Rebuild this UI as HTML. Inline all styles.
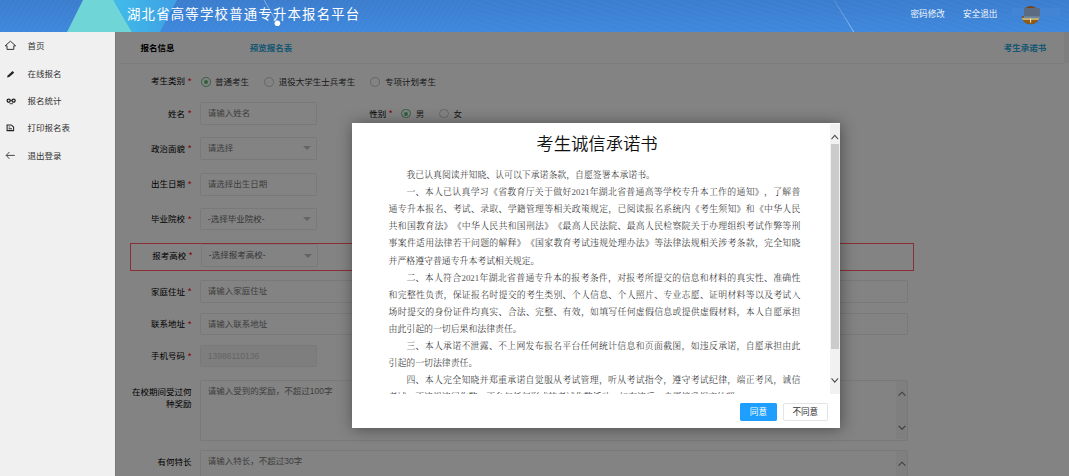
<!DOCTYPE html>
<html lang="zh-CN">
<head>
<meta charset="utf-8">
<title>湖北省高等学校普通专升本报名平台</title>
<style>
*{box-sizing:border-box;margin:0;padding:0}
html,body{width:1069px;height:476px;overflow:hidden}
body{position:relative;font-family:"Liberation Sans","Noto Sans CJK SC",sans-serif;font-size:8.5px;color:#333;background:#f0f0f0}
.abs{position:absolute}
/* header */
#hd{position:absolute;left:0;top:0;width:1069px;height:32px;background:#3d81d5;overflow:hidden}
#hd svg{position:absolute;left:0;top:0}
#title{position:absolute;left:127px;top:0;height:32px;line-height:30px;font-size:13.4px;letter-spacing:1.2px;color:#fff;white-space:nowrap}
.hl{position:absolute;top:0;height:32px;line-height:29px;font-weight:350;color:#fff;font-size:8.6px;white-space:nowrap}
/* sidebar */
#side{position:absolute;left:0;top:32px;width:115px;height:444px;background:#f0f0f0}
.mi{position:absolute;left:27.5px;height:14px;line-height:14px;font-size:8.5px;color:#333;white-space:nowrap}
#side svg{position:absolute}
/* main */
#main{position:absolute;left:115px;top:32px;width:954px;height:444px;background:#fff;overflow:hidden;border-left:1px solid #e9e9e9}
#card{position:absolute;left:1px;top:0;width:953px;height:460px}
#shade{position:absolute;left:115px;top:32px;width:954px;height:444px;background:rgba(0,0,0,.488)}
.tab{position:absolute;top:8px;height:16px;line-height:16px;font-weight:bold;font-size:8.5px;white-space:nowrap}
.lb{position:absolute;width:80px;text-align:right;line-height:12.3px;font-size:8.5px;color:#000;white-space:nowrap}
.lb i{font-style:normal;color:#f00;margin-left:2.6px;font-size:9.6px;position:relative;top:-.4px}
.ip{position:absolute;height:22.5px;border:1px solid #ececec;border-radius:1.5px;background:#fff;line-height:20.5px;padding-left:6.5px;font-size:8.5px;color:#7a7a7a;white-space:nowrap;overflow:hidden}
.ip.sel:after{content:"";position:absolute;right:4.9px;top:8.4px;border:4.3px solid transparent;border-top-color:#c2c2c2;border-bottom-width:0}
.rd{position:absolute;width:9.6px;height:9.6px;border-radius:50%;border:1px solid #c6c6c6;background:#fff}
.rd.on{border-color:#5fb878}
.rd.on:after{content:"";position:absolute;left:1.8px;top:1.8px;width:4px;height:4px;border-radius:50%;background:#5fb878}
.rt{position:absolute;height:14px;line-height:14px;font-size:8.5px;color:#333;white-space:nowrap}
/* modal */
#modal{position:absolute;left:352px;top:123px;width:488px;height:305px;background:#fff;box-shadow:.6px .6px 14px rgba(0,0,0,.42)}
#mc{position:absolute;left:0;top:0;width:478px;height:270.5px;overflow:hidden}
#mt{position:absolute;left:0;top:8.9px;font-weight:350;width:490px;text-align:center;font-size:17.35px;line-height:24px;color:#111}
.ln{position:absolute;left:36.6px;width:411.8px;height:17.1px;line-height:17.1px;font-family:"Liberation Serif","Noto Serif CJK SC",serif;font-size:8.9px;font-weight:300;color:#222;white-space:nowrap;text-align:justify;text-align-last:justify;text-spacing-trim:space-all}
.ln.in{left:54.4px;width:394px}
.dg{color:#555}
.ln.e{text-align:left;text-align-last:left}
#sb{position:absolute;left:478.4px;top:.5px;width:9.6px;height:270px;background:#f1f1f1}
#sb .th{position:absolute;left:.9px;top:20.5px;width:7.9px;height:205px;background:#cbcbcb}
#sb svg{position:absolute;left:0}
.btn{position:absolute;top:280px;height:17.5px;line-height:17.6px;font-size:8.6px;text-align:center;border-radius:1.2px;white-space:nowrap}
</style>
</head>
<body>

<div id="hd">
<svg width="1069" height="32" viewBox="0 0 1069 32">
<defs>
<pattern id="st" width="5" height="32" patternUnits="userSpaceOnUse" patternTransform="skewX(-30)">
<rect x="0" y="0" width="2.4" height="32" fill="#fff" fill-opacity=".02"/>
</pattern>
<pattern id="st2" width="40" height="4.6" patternUnits="userSpaceOnUse" patternTransform="rotate(17)"><rect x="0" y="0" width="40" height="2.2" fill="#fff" fill-opacity=".02"/></pattern>
<linearGradient id="hg" x1="0" y1="0" x2="0" y2="1"><stop offset="0" stop-color="#3b7ccd"/><stop offset="1" stop-color="#3e88dd"/></linearGradient>
<linearGradient id="lg" x1="0" y1="0" x2="0" y2="1"><stop offset="0" stop-color="#fff" stop-opacity=".12"/><stop offset="1" stop-color="#fff" stop-opacity=".5"/></linearGradient>
<linearGradient id="lb" x1="0" y1="0" x2="1" y2="0"><stop offset="0" stop-color="#40bcea"/><stop offset="1" stop-color="#3f9fe4"/></linearGradient>
</defs>
<rect width="1069" height="32" fill="url(#hg)"/>
<rect width="470" height="32" fill="url(#st)"/>
<rect x="470" width="599" height="32" fill="url(#st2)"/>
<polygon points="67,32 83,0 113.5,0 132,32" fill="#6fd5d6"/>
<polygon points="113.5,0 177,0 160,32 132,32" fill="url(#lb)"/>
<line x1="264" y1="0" x2="277.4" y2="23.2" stroke="#fff" stroke-opacity=".55" stroke-width=".7"/>
<circle cx="277.4" cy="23.3" r="2.8" fill="#fff"/>
<line x1="834.1" y1="0" x2="853.8" y2="32" stroke="url(#lg)" stroke-width=".9"/>
</svg>
<div id="title">湖北省高等学校普通专升本报名平台</div>
<div class="hl" style="left:910.5px">密码修改</div>
<div class="hl" style="left:963px">安全退出</div>
<svg width="58" height="32" viewBox="0 0 58 32" style="left:1005px">
<defs><clipPath id="av"><circle cx="25.6" cy="15.2" r="9.1"/></clipPath></defs>
<g clip-path="url(#av)">
<rect x="14" y="5" width="24" height="22" fill="#7a4413"/>
<rect x="14" y="17.8" width="24" height="2.4" fill="#cdb36a"/>
<rect x="14" y="20.2" width="24" height="7" fill="#8f5c17"/>
<rect x="25" y="18" width="1.1" height="4.6" fill="#e9e2c6"/>
</g>
<rect x="7" y="8" width="48" height="8.3" fill="#4484d4"/>
<rect x="19" y="8" width="15.9" height="10.1" fill="#5b6c82"/>
<rect x="19" y="16.3" width="15.9" height="1.8" fill="#6f89a2"/>
</svg>
</div>

<div id="side">
<!-- home -->
<svg width="13" height="11" viewBox="0 0 13 11" style="left:4.4px;top:8.4px"><path d="M6.4 1.2 L1.2 5.8 H3 V9.4 H9.8 V5.8 H11.6 Z" fill="none" stroke="#333" stroke-width="1" stroke-linejoin="miter"/></svg>
<div class="mi" style="top:6.6px">首页</div>
<!-- pencil -->
<svg width="10" height="9" viewBox="0 0 10 9" style="left:6px;top:37.6px"><path d="M1 7.6 L1.7 5.6 L6.6 1.1 L8.2 2.7 L3.2 7 Z" fill="#222"/></svg>
<div class="mi" style="top:34.8px">在线报名</div>
<!-- glasses -->
<svg width="11" height="7" viewBox="0 0 11 7" style="left:5.6px;top:65.6px"><circle cx="2.7" cy="2.6" r="1.55" fill="none" stroke="#222" stroke-width="1.3"/><circle cx="7.6" cy="2.6" r="1.55" fill="none" stroke="#222" stroke-width="1.3"/><path d="M3.6 5.7 H6.8" stroke="#222" stroke-width=".9"/><path d="M4.2 2.4 H6.2" stroke="#222" stroke-width=".8"/></svg>
<div class="mi" style="top:61.9px">报名统计</div>
<!-- doc -->
<svg width="9" height="8" viewBox="0 0 9 8" style="left:6.4px;top:92.4px"><path d="M1.1 .9 H5.2 L7.6 3 V6.6 H1.1 Z" fill="none" stroke="#222" stroke-width="1.05"/><path d="M2.6 4.8 H6" stroke="#222" stroke-width="1"/><path d="M2.6 3 H4.2" stroke="#222" stroke-width=".8"/></svg>
<div class="mi" style="top:89.2px">打印报名表</div>
<!-- arrow -->
<svg width="11" height="9" viewBox="0 0 11 9" style="left:5.4px;top:119px"><path d="M4.4 1 L1.2 4.4 L4.4 7.8 M1.4 4.4 H9.8" fill="none" stroke="#333" stroke-width=".9"/></svg>
<div class="mi" style="top:116.5px">退出登录</div>
</div>

<div id="main">
<div id="card">
<div class="abs" style="left:947px;top:0;width:6px;height:31px;background:#f6f6f6"></div>
<div class="tab" style="left:23.4px;color:#000">报名信息</div>
<div class="tab" style="left:132.7px;color:#2aa8e0">预览报名表</div>
<div class="tab" style="left:886.8px;color:#2aa8e0">考生承诺书</div>
<div class="abs" style="left:3.6px;top:30.8px;width:943.4px;height:1px;background:#efefef"></div>

<!-- row 1 -->
<div class="lb" style="left:-5.6px;top:43.3px">考生类别<i>*</i></div>
<div class="rd on" style="left:84px;top:45px"></div><div class="rt" style="left:98px;top:42.8px">普通考生</div>
<div class="rd" style="left:147.2px;top:45px"></div><div class="rt" style="left:161.8px;top:42.8px">退役大学生士兵考生</div>
<div class="rd" style="left:253.2px;top:45px"></div><div class="rt" style="left:267.9px;top:42.8px">专项计划考生</div>

<!-- row 2 -->
<div class="lb" style="left:-5.6px;top:75.8px">姓名<i>*</i></div>
<div class="ip" style="left:83.3px;top:70.3px;width:116.3px">请输入姓名</div>
<div class="lb" style="left:195.5px;top:75.6px">性别<i>*</i></div>
<div class="rd on" style="left:284.4px;top:76.8px"></div><div class="rt" style="left:298.8px;top:74.7px">男</div>
<div class="rd" style="left:322px;top:76.8px"></div><div class="rt" style="left:336.6px;top:74.7px">女</div>

<!-- row 3 -->
<div class="lb" style="left:-5.6px;top:110.6px">政治面貌<i>*</i></div>
<div class="ip sel" style="left:83.3px;top:105.1px;width:116.3px">请选择</div>

<!-- row 4 -->
<div class="lb" style="left:-5.6px;top:146px">出生日期<i>*</i></div>
<div class="ip" style="left:83.3px;top:141px;width:116.3px">请选择出生日期</div>

<!-- row 5 -->
<div class="lb" style="left:-5.6px;top:181px">毕业院校<i>*</i></div>
<div class="ip sel" style="left:83.3px;top:175.8px;width:116.3px;color:#6a6a6a">-选择毕业院校-</div>

<!-- row 6 red box -->
<div class="lb" style="left:-4.5px;top:217.8px">报考高校<i>*</i></div>
<div class="ip sel" style="left:84.3px;top:212.3px;width:116.3px;color:#6a6a6a">-选择报考高校-</div>

<!-- row 7 -->
<div class="lb" style="left:-5.6px;top:253.6px">家庭住址<i>*</i></div>
<div class="ip" style="left:83.3px;top:248.2px;width:707.3px">请输入家庭住址</div>

<!-- row 8 -->
<div class="lb" style="left:-5.6px;top:286.2px">联系地址<i>*</i></div>
<div class="ip" style="left:83.3px;top:280.5px;width:707.3px">请输入联系地址</div>

<!-- row 9 -->
<div class="lb" style="left:-5.6px;top:318.2px">手机号码<i>*</i></div>
<div class="ip" style="left:83.3px;top:312.9px;width:116.3px;background:#f5f5f5;color:#c4c4c4">13986110136</div>

<!-- row 10 -->
<div class="lb" style="left:-5.6px;top:353.6px">在校期间受过何<br>种奖励</div>
<div class="ip" style="left:83.3px;top:348px;width:707.3px;height:61px;line-height:21px">请输入受到的奖励，不超过100字
<div class="abs" style="right:0;top:0;width:10.3px;height:58.4px;background:#f7f7f7"></div>
<svg class="abs" width="10" height="58" viewBox="0 0 10 58" style="right:0;top:0"><path d="M1.6 14.6 L5 11.2 L8.4 14.6 M1.6 44.8 L5 48.2 L8.4 44.8" fill="none" stroke="#777" stroke-width="1.15"/></svg>
</div>

<!-- row 11 -->
<div class="lb" style="left:-5.6px;top:423.6px">有何特长</div>
<div class="ip" style="left:83.3px;top:418.2px;width:707.3px;height:50px;line-height:21px">请输入特长，不超过30字
<div class="abs" style="right:0;top:0;width:10.3px;height:48px;background:#f7f7f7"></div>
<svg class="abs" width="10" height="58" viewBox="0 0 10 58" style="right:0;top:0"><path d="M1.6 14.6 L5 11.2 L8.4 14.6" fill="none" stroke="#777" stroke-width="1.15"/></svg>
</div>
</div>
</div>

<div id="shade"></div>
<div class="abs" style="left:130.2px;top:242.8px;width:783.6px;height:28px;border:1px solid #8a3034"></div>

<div id="modal">
<div id="mc">
<div id="mt">考生诚信承诺书</div>
<div class="ln in e" style="top:44.0px">我已认真阅读并知晓、认可以下承诺条款，自愿签署本承诺书。</div>
<div class="ln in" style="top:61.1px">一、本人已认真学习《省教育厅关于做好<span class="dg">2021</span>年湖北省普通高等学校专升本工作的通知》，了解普</div>
<div class="ln" style="top:78.2px">通专升本报名、考试、录取、学籍管理等相关政策规定，已阅读报名系统内《考生须知》和《中华人民</div>
<div class="ln" style="top:95.3px">共和国教育法》《中华人民共和国刑法》《最高人民法院、最高人民检察院关于办理组织考试作弊等刑</div>
<div class="ln" style="top:112.4px">事案件适用法律若干问题的解释》《国家教育考试违规处理办法》等法律法规相关涉考条款，完全知晓</div>
<div class="ln e" style="top:129.5px">并严格遵守普通专升本考试相关规定。</div>
<div class="ln in" style="top:146.6px">二、本人符合<span class="dg">2021</span>年湖北省普通专升本的报考条件，对报考所提交的信息和材料的真实性、准确性</div>
<div class="ln" style="top:163.7px">和完整性负责，保证报名时提交的考生类别、个人信息、个人照片、专业志愿、证明材料等以及考试入</div>
<div class="ln" style="top:180.8px">场时提交的身份证件均真实、合法、完整、有效，如填写任何虚假信息或提供虚假材料，本人自愿承担</div>
<div class="ln e" style="top:197.9px">由此引起的一切后果和法律责任。</div>
<div class="ln in" style="top:215.0px">三、本人承诺不泄露、不上网发布报名平台任何统计信息和页面截图，如违反承诺，自愿承担由此</div>
<div class="ln e" style="top:232.1px">引起的一切法律责任。</div>
<div class="ln in" style="top:249.2px">四、本人完全知晓并郑重承诺自觉服从考试管理，听从考试指令，遵守考试纪律，端正考风，诚信</div>
<div class="ln e" style="top:266.3px">考试，不违规违纪作弊，不参与任何形式的考试作弊活动，如有违反，自愿接受相应处理。</div>
</div>
<div id="sb">
<div class="th"></div>
<svg width="9.6" height="270" viewBox="0 0 9.6 270"><path d="M1.5 15 L4.8 11.2 L8.1 15 M1.5 254.4 L4.8 258.2 L8.1 254.4" fill="none" stroke="#505050" stroke-width="1.1"/></svg>
</div>
<div class="btn" style="left:388px;width:36.8px;background:#1e9fff;color:#fff;border:1px solid #1e9fff">同意</div>
<div class="btn" style="left:431px;width:44.6px;background:#fff;color:#333;border:1px solid #e4e4e4">不同意</div>
</div>

</body>
</html>
